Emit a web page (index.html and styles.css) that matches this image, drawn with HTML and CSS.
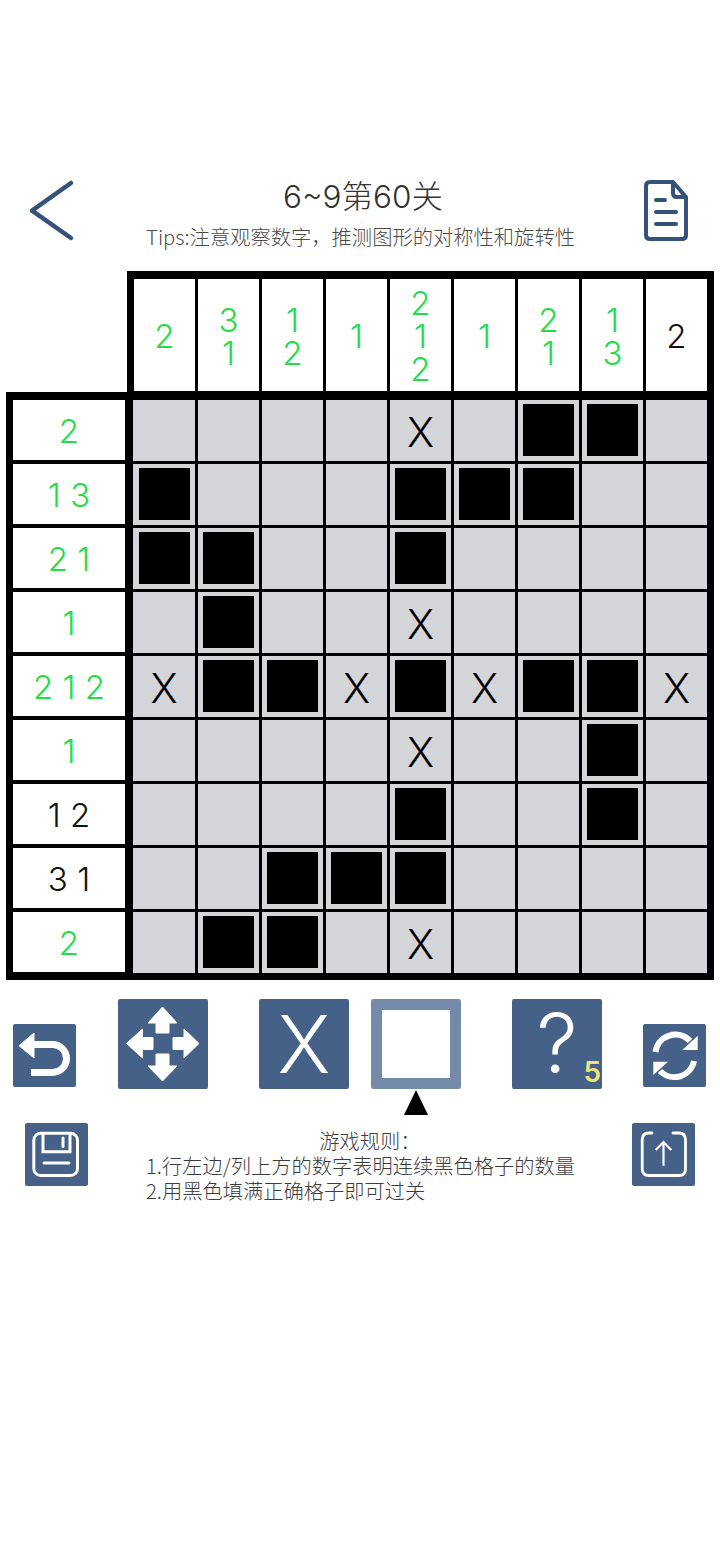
FILE: index.html
```html
<!DOCTYPE html>
<html lang="zh">
<head>
<meta charset="utf-8">
<title>6~9第60关</title>
<link rel="stylesheet" href="styles.css">
</head>
<body>
<header class="header">
  <svg class="back" width="50" height="64" viewBox="0 0 50 64"><path d="M43 5 L4 32.700 L43 60" fill="none" stroke="#34527a" stroke-width="4.500" stroke-linecap="round" stroke-linejoin="round"/></svg>
  <div class="titles">
    <div class="title">6~9第60关</div>
    <div class="tips">Tips:注意观察数字，推测图形的对称性和旋转性</div>
  </div>
  <svg class="doc" width="46" height="64" viewBox="0 0 46 64"><path d="M7 4 H30 L43 19 V57 Q43 61 39 61 H7 Q3 61 3 57 V8 Q3 4 7 4 Z" fill="none" stroke="#34527a" stroke-width="4" stroke-linejoin="round"/><path d="M30 4 V15 Q30 19 34 19 H43" fill="none" stroke="#34527a" stroke-width="4"/><path d="M13 22 H22 M13 34 H33 M13 46 H33" stroke="#34527a" stroke-width="4" stroke-linecap="round"/></svg>
</header>

<section class="board">
  <div class="top-clues">
    <div class="clue green"><span>2</span></div>
    <div class="clue green"><span>3<br>1</span></div>
    <div class="clue green"><span>1<br>2</span></div>
    <div class="clue green"><span>1</span></div>
    <div class="clue green"><span>2<br>1<br>2</span></div>
    <div class="clue green"><span>1</span></div>
    <div class="clue green"><span>2<br>1</span></div>
    <div class="clue green"><span>1<br>3</span></div>
    <div class="clue"><span>2</span></div>
  </div>
  <div class="main">
    <div class="row-clues">
      <div class="clue green">2</div>
      <div class="clue green">1 3</div>
      <div class="clue green">2 1</div>
      <div class="clue green">1</div>
      <div class="clue green">2 1 2</div>
      <div class="clue green">1</div>
      <div class="clue">1 2</div>
      <div class="clue">3 1</div>
      <div class="clue green">2</div>
    </div>
    <div class="cells">
      <div class="cell"></div><div class="cell"></div><div class="cell"></div><div class="cell"></div><div class="cell">X</div><div class="cell"></div><div class="cell on"></div><div class="cell on"></div><div class="cell"></div>
      <div class="cell on"></div><div class="cell"></div><div class="cell"></div><div class="cell"></div><div class="cell on"></div><div class="cell on"></div><div class="cell on"></div><div class="cell"></div><div class="cell"></div>
      <div class="cell on"></div><div class="cell on"></div><div class="cell"></div><div class="cell"></div><div class="cell on"></div><div class="cell"></div><div class="cell"></div><div class="cell"></div><div class="cell"></div>
      <div class="cell"></div><div class="cell on"></div><div class="cell"></div><div class="cell"></div><div class="cell">X</div><div class="cell"></div><div class="cell"></div><div class="cell"></div><div class="cell"></div>
      <div class="cell">X</div><div class="cell on"></div><div class="cell on"></div><div class="cell">X</div><div class="cell on"></div><div class="cell">X</div><div class="cell on"></div><div class="cell on"></div><div class="cell">X</div>
      <div class="cell"></div><div class="cell"></div><div class="cell"></div><div class="cell"></div><div class="cell">X</div><div class="cell"></div><div class="cell"></div><div class="cell on"></div><div class="cell"></div>
      <div class="cell"></div><div class="cell"></div><div class="cell"></div><div class="cell"></div><div class="cell on"></div><div class="cell"></div><div class="cell"></div><div class="cell on"></div><div class="cell"></div>
      <div class="cell"></div><div class="cell"></div><div class="cell on"></div><div class="cell on"></div><div class="cell on"></div><div class="cell"></div><div class="cell"></div><div class="cell"></div><div class="cell"></div>
      <div class="cell"></div><div class="cell on"></div><div class="cell on"></div><div class="cell"></div><div class="cell">X</div><div class="cell"></div><div class="cell"></div><div class="cell"></div><div class="cell"></div>
    </div>
  </div>
</section>

<section class="tools">
  <div class="btn small undo"><svg width="63" height="63" viewBox="0 0 63 63"><path d="M20 20.500 H39.500 A14 14 0 0 1 39.500 48.500 H18" fill="none" stroke="#fff" stroke-width="7"/><path d="M6 21.700 L21 9 V34 Z" fill="#fff" stroke="#fff" stroke-width="1" stroke-linejoin="round"/></svg></div>
  <div class="btn big move"><svg width="90" height="90" viewBox="0 0 90 90"><path d="M44.500 8 L59 24 H51 V34 H38 V24 H30 Z M44.500 82 L59 67 H51 V55 H38 V67 H30 Z M8.500 44.500 L24.500 30 V38.500 H35 V50.500 H24.500 V59 Z M81 44.500 L66 30 V38.500 H55 V50.500 H66 V59 Z" fill="#fff" stroke="#fff" stroke-width="1" stroke-linejoin="round"/></svg></div>
  <div class="btn big cross">X</div>
  <div class="fill-wrap">
    <div class="btn big fill"><div class="fill-box"></div></div>
    <div class="pointer"></div>
  </div>
  <div class="btn big hint">?<span class="count">5</span></div>
  <div class="btn small redo"><svg width="63" height="63" viewBox="0 0 63 63"><path d="M12.500 28 A20 20 0 0 1 47 17" fill="none" stroke="#fff" stroke-width="6"/><path d="M51 37 A20 20 0 0 1 17 47" fill="none" stroke="#fff" stroke-width="6"/><path d="M54.700 11.700 V26 H39.300 Z M10.300 51 V37.700 H25 Z" fill="#fff"/></svg></div>
</section>

<section class="bottom">
  <div class="btn small save"><svg width="63" height="63" viewBox="0 0 63 63"><rect x="8.800" y="10.200" width="43.700" height="42.300" rx="7" fill="none" stroke="#fff" stroke-width="3"/><path d="M18 10.200 V28.700 H45 V10.200" fill="none" stroke="#fff" stroke-width="3"/><path d="M38 15 V23.500 M19 40 H44" stroke="#fff" stroke-width="3" stroke-linecap="round"/></svg></div>
  <div class="rules">
    <div class="rules-title">游戏规则：</div>
    <div>1.行左边/列上方的数字表明连续黑色格子的数量</div>
    <div>2.用黑色填满正确格子即可过关</div>
  </div>
  <div class="btn small share"><svg width="63" height="63" viewBox="0 0 63 63"><path d="M20 10 H17 Q10.200 10 10.200 17 V46 Q10.200 52.500 17 52.500 H47 Q53.500 52.500 53.500 46 V17 Q53.500 10 47 10 H41" fill="none" stroke="#fff" stroke-width="2.800" stroke-linecap="round"/><path d="M31.500 42.700 V19 M23.700 27 L31.500 19 L39.300 27" fill="none" stroke="#fff" stroke-width="2.200"/></svg></div>
</section>
</body>
</html>
```
FILE: styles.css
```css
* { box-sizing: border-box; }
html, body { margin: 0; padding: 0; background: #fff; }
body { width: 720px; height: 1544px; overflow: hidden; font-family: Inter, "Noto Sans CJK SC", sans-serif; }

.header { height: 271px; padding: 178px 31px 0 28px; display: flex; align-items: flex-start; justify-content: space-between; }
.back { flex: none; }
.doc { flex: none; }
.titles { flex: none; width: 460px; text-align: center; }
.title { font-size: 31.500px; line-height: 36px; color: #333; font-weight: 300; padding-left: 5px; margin-top: 1px; }
.tips { font-size: 20.300px; line-height: 26px; color: #4a4a4a; margin-top: 8px; font-family: "Noto Sans CJK SC", sans-serif; font-weight: 300; white-space: nowrap; }

.board { margin-left: 6px; width: 708px; }
.top-clues { margin-left: 121px; width: 587px; height: 121px; padding: 8px 7px 1px 7px; background: #000; display: grid; grid-template-columns: repeat(9, 61px); gap: 3px; }
.main { background: #000; height: 588px; padding: 8px 7px 7px 7px; display: flex; }
.row-clues { width: 112px; margin-right: 8px; display: grid; grid-template-rows: repeat(9, 60px); row-gap: 4px; }
.cells { display: grid; grid-template-columns: 62px repeat(8, 61px); grid-template-rows: repeat(9, 61px); gap: 3px; }

.clue { background: #fff; color: #111; display: flex; align-items: center; justify-content: center; text-align: center; font-size: 33px; line-height: 33px; font-weight: 350; padding-top: 3px; }
.green { color: #24dd46; }
.cell { background: #d4d5d9; position: relative; display: flex; align-items: center; justify-content: center; font-size: 41px; font-weight: 300; color: #000; padding-top: 2px; }
.cell.on::after { content: ""; position: absolute; right: 5px; top: 4px; width: 51px; height: 52px; background: #000; }

.tools { margin-top: 19px; height: 90px; display: flex; align-items: flex-start; padding-left: 13px; }
.btn { background: #456187; border-radius: 2px; flex: none; color: #fff; }
.btn svg { display: block; }
.small { width: 63px; height: 63px; }
.big { width: 90px; height: 90px; }
.undo { margin-top: 25px; margin-right: 42px; }
.move { margin-right: 51px; }
.cross { margin-right: 22px; font-size: 80px; line-height: 90px; text-align: center; font-weight: 300; }
.fill-wrap { margin-right: 51px; position: relative; }
.fill { background: #748aa9; padding: 11px; }
.fill-box { width: 68px; height: 68px; background: #fff; }
.pointer { position: absolute; left: 33px; top: 91px; width: 0; height: 0; border-left: 12px solid transparent; border-right: 12px solid transparent; border-bottom: 25px solid #000; }
.hint { margin-right: 41px; position: relative; font-size: 82px; line-height: 90px; text-align: center; font-weight: 300; }
.count { position: absolute; right: 1px; bottom: 2px; font-size: 28px; line-height: 30px; font-weight: 600; color: #efe27c; }
.redo { margin-top: 25px; }

.bottom { margin-top: 34px; display: flex; align-items: flex-start; padding-left: 25px; }
.save { margin-right: 58px; }
.rules { width: 428px; height: 76px; margin-top: 5px; font-family: "Noto Sans CJK SC", sans-serif; font-size: 20.250px; line-height: 25px; color: #3c3c3c; font-weight: 300; white-space: nowrap; margin-right: 58px; }
.rules-title { text-align: center; padding-left: 20px; }
```
